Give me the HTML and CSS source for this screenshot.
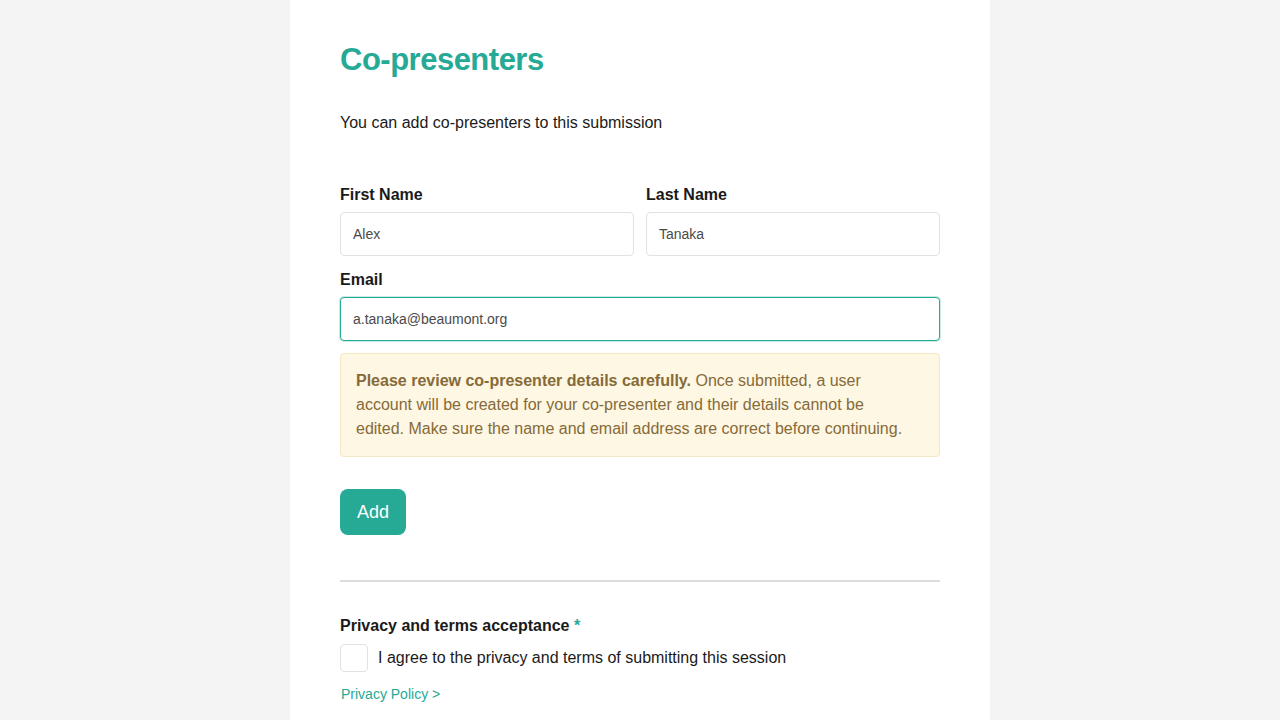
FILE: index.html
```html
<!DOCTYPE html>
<html lang="en">
<head>
<meta charset="utf-8">
<title>Co-presenters</title>
<link rel="stylesheet" href="styles.css">
</head>
<body>
<main class="page">
  <h1 class="title">Co-presenters</h1>
  <p class="intro">You can add co-presenters to this submission</p>
  <form class="form">
    <div class="row">
      <div class="field">
        <label class="label">First Name</label>
        <input class="input" type="text" value="Alex">
      </div>
      <div class="field">
        <label class="label">Last Name</label>
        <input class="input" type="text" value="Tanaka">
      </div>
    </div>
    <div class="field field-last">
      <label class="label">Email</label>
      <input class="input input-focus" type="text" value="a.tanaka@beaumont.org">
    </div>
    <div class="alert"><strong>Please review co-presenter details carefully.</strong> Once submitted, a user account will be created for your co-presenter and their details cannot be edited. Make sure the name and email address are correct before continuing.</div>
    <button class="btn" type="button">Add</button>
  </form>
  <hr class="divider">
  <div class="terms">
    <div class="label">Privacy and terms acceptance <span class="req">*</span></div>
    <label class="check-row"><span class="checkbox"></span><span>I agree to the privacy and terms of submitting this session</span></label>
    <a class="link" href="#">Privacy Policy &gt;</a>
  </div>
</main>
</body>
</html>
```

FILE: styles.css
```css
html, body {
  margin: 0;
  padding: 0;
  background: #f4f4f4;
  font-family: "Liberation Sans", Arial, Helvetica, sans-serif;
  color: #1a1a1a;
}
.page {
  width: 700px;
  margin: 0 auto;
  padding: 41px 50px 40px;
  background: #ffffff;
  min-height: 720px;
  box-sizing: border-box;
}
.title {
  margin: 0;
  font-size: 31px;
  line-height: 38px;
  font-weight: 700;
  color: #26a995;
  letter-spacing: -0.5px;
}
.intro {
  margin: 32px 0 0;
  font-size: 16px;
  line-height: 24px;
}
.form {
  margin-top: 50px;
  display: flex;
  flex-direction: column;
}
.row {
  display: flex;
  gap: 12px;
}
.row .field { flex: 1; }
.field {
  display: flex;
  flex-direction: column;
  gap: 7px;
  margin-bottom: 14px;
}
.field-last { margin-bottom: 12px; }
.label {
  font-size: 16px;
  line-height: 20px;
  font-weight: 700;
  color: #1a1a1a;
}
.input {
  height: 44px;
  box-sizing: border-box;
  border: 1px solid #e2e2e2;
  border-radius: 4px;
  padding: 0 12px;
  font-family: inherit;
  font-size: 14px;
  color: #4a4a4a;
  background: #fff;
  outline: none;
}
.input-focus {
  border-color: #26a995;
  box-shadow: 0 0 0 1px #c9ebe4;
}
.alert {
  background: #fdf7e4;
  border: 1px solid #f5e9c4;
  border-radius: 4px;
  padding: 15px 30px 15px 15px;
  font-size: 16px;
  line-height: 24px;
  color: #866a38;
}
.alert strong { font-weight: 700; }
.btn {
  align-self: flex-start;
  margin-top: 32px;
  height: 46px;
  width: 66px;
  border: none;
  border-radius: 8px;
  background: #26a995;
  color: #fff;
  font-family: inherit;
  font-size: 18px;
  padding: 0;
}
.divider {
  margin: 45px 0 0;
  border: none;
  border-top: 2px solid #dcdcdc;
}
.terms {
  margin-top: 34px;
  display: flex;
  flex-direction: column;
}
.req { color: #26a995; }
.check-row {
  margin-top: 8px;
  display: flex;
  align-items: center;
  gap: 10px;
  font-size: 16px;
  line-height: 20px;
}
.checkbox {
  width: 28px;
  height: 28px;
  box-sizing: border-box;
  border: 1px solid #e2e2e2;
  border-radius: 4px;
  background: #fff;
}
.link {
  margin-top: 12px;
  margin-left: 1px;
  font-size: 14px;
  line-height: 20px;
  color: #26a995;
  text-decoration: none;
}
```
